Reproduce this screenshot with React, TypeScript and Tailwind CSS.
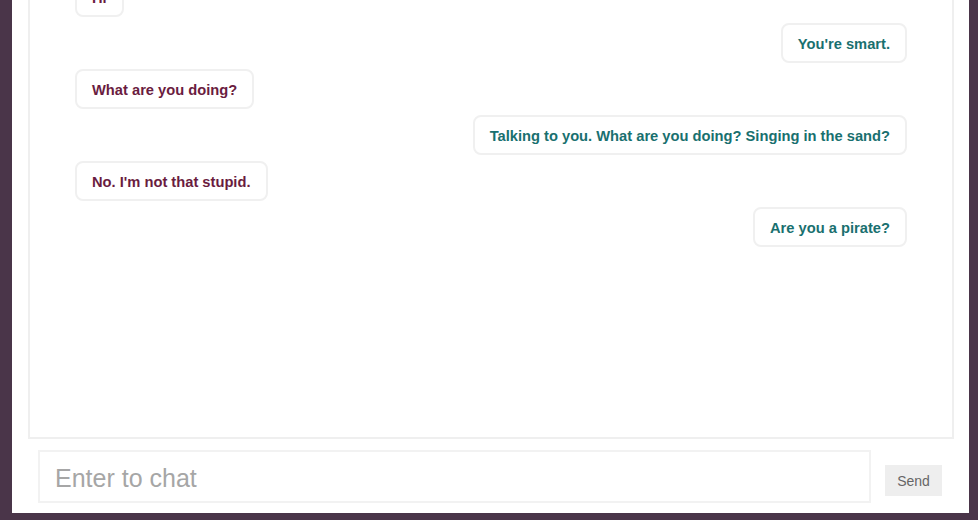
import { useState } from 'react';

type Msg = { id: number; text: string; mine: boolean };

const messages: Msg[] = [
  { id: 1, text: 'Hi', mine: false },
  { id: 2, text: "You're smart.", mine: true },
  { id: 3, text: 'What are you doing?', mine: false },
  { id: 4, text: 'Talking to you. What are you doing? Singing in the sand?', mine: true },
  { id: 5, text: "No. I'm not that stupid.", mine: false },
  { id: 6, text: 'Are you a pirate?', mine: true },
];

export default function App() {
  const [draft, setDraft] = useState('');

  return (
    <div className="h-[520px] overflow-hidden bg-[#4a3549] pl-[12px] pr-[9px] pb-[7px] font-['Liberation_Sans',Arial,sans-serif]">
      <div className="h-full bg-white flex flex-col">
        {/* Chat log */}
        <div className="flex-1 min-h-0 ml-[16px] mr-[15px] border-2 border-t-0 border-[#efefef] overflow-hidden">
          <div className="flex flex-col gap-[6px] mt-[-23px] pl-[45px] pr-[45px]">
            {messages.map((m) => (
              <div key={m.id} className={`flex ${m.mine ? 'justify-end' : 'justify-start'}`}>
                <div
                  className={`h-[40px] flex items-center pt-[2px] px-[15px] border-2 border-[#f0f0f0] rounded-[8px] text-[14.7px] font-bold ${
                    m.mine ? 'text-[#19706f]' : 'text-[#6a1c40]'
                  }`}
                >
                  {m.text}
                </div>
              </div>
            ))}
          </div>
        </div>

        {/* Input row */}
        <div className="flex items-start h-[74px] pl-[26px] pr-[27px] pt-[11px]">
          <input
            value={draft}
            onChange={(e) => setDraft(e.target.value)}
            placeholder="Enter to chat"
            className="flex-1 h-[53px] border-2 border-[#f2f2f2] pl-[15px] pt-[3px] text-[25px] text-[#333] placeholder:text-[#a6a6a6] caret-[#6a1c40] outline-none"
          />
          <button className="ml-[14px] mt-[15px] w-[57px] h-[31px] bg-[#eeeeee] pt-[1px] text-[14px] text-[#666]">
            Send
          </button>
        </div>
      </div>
    </div>
  );
}
